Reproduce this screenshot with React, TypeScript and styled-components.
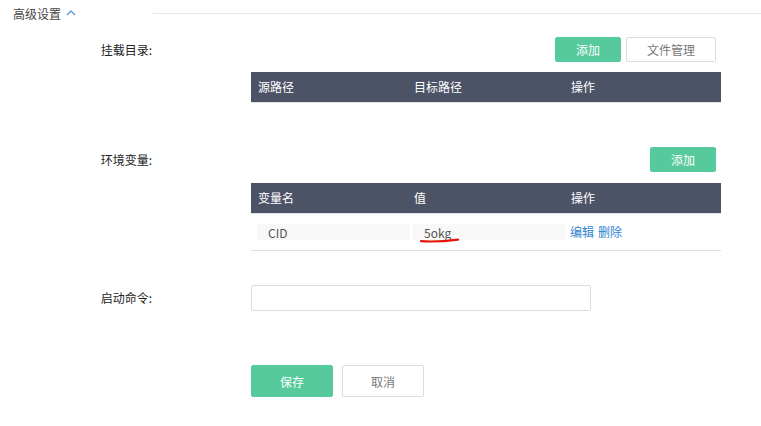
import styled, { createGlobalStyle } from "styled-components"

const GlobalStyle = createGlobalStyle`
  body{
    margin:0;
    background:#fff;
    font-family:"Noto Sans CJK SC","Noto Sans",sans-serif;
    font-size:12px;
    color:#333;
  }
`

const mountCols = ["源路径", "目标路径", "操作"]
const envCols = ["变量名", "值", "操作"]

const App = () => {
    return (
        <Page>
            <GlobalStyle />
            <SectionHeader>
                <Title>
                    高级设置
                    <svg width="10" height="6" viewBox="0 0 10 6">
                        <polyline points="1,5 5,1 9,5" fill="none" stroke="#5b9bd5" strokeWidth="1.3" />
                    </svg>
                </Title>
                <Rule />
            </SectionHeader>

            <FormRow $top={10}>
                <Label $lh={25}>挂载目录:</Label>
                <div>
                    <Toolbar $gap={10}>
                        <Button $primary>添加</Button>
                        <Button $w={90}>文件管理</Button>
                    </Toolbar>
                    <TableHead>
                        {mountCols.map(c => <HeadCell key={c}>{c}</HeadCell>)}
                    </TableHead>
                </div>
            </FormRow>

            <FormRow $top={44}>
                <Label $lh={25}>环境变量:</Label>
                <div>
                    <Toolbar $gap={11}>
                        <Button $primary>添加</Button>
                    </Toolbar>
                    <TableHead>
                        {envCols.map(c => <HeadCell key={c}>{c}</HeadCell>)}
                    </TableHead>
                    <TableRow>
                        <Cell><CellInput defaultValue="CID" readOnly /></Cell>
                        <Cell>
                            <Marked>
                                <CellInput defaultValue="5okg" readOnly />
                                <Squiggle width="39" height="5" viewBox="0 0 39 5">
                                    <path d="M1 3.2 Q18 4.2 38 1.6" fill="none" stroke="#e8140c" strokeWidth="2.2" strokeLinecap="round" />
                                </Squiggle>
                            </Marked>
                        </Cell>
                        <Cell>
                            <Link>编辑</Link>
                            <Link>删除</Link>
                        </Cell>
                    </TableRow>
                </div>
            </FormRow>

            <FormRow $top={34}>
                <Label $lh={26}>启动命令:</Label>
                <TextInput />
            </FormRow>

            <FormRow $top={54}>
                <span />
                <Actions>
                    <Button $primary $w={82} $h={32}>保存</Button>
                    <Button $w={82} $h={32}>取消</Button>
                </Actions>
            </FormRow>
        </Page>
    )
}

export default App

const Page = styled.div`
    width:761px;
    height:426px;
    overflow:hidden;
`

const SectionHeader = styled.div`
    display:flex;
    align-items:center;
    height:27px;
`

const Title = styled.div`
    width:153px;
    box-sizing:border-box;
    padding-left:13px;
    display:flex;
    align-items:center;
    gap:5px;
    color:#444;
    line-height:16px;
    svg{ margin-top:-2px; }
`

const Rule = styled.div`
    flex:1;
    height:1px;
    background:#e6e6e6;
`

const FormRow = styled.div<{ $top: number }>`
    display:grid;
    grid-template-columns:152px 470px;
    column-gap:99px;
    margin-top:${p => p.$top}px;
`

const Label = styled.div<{ $lh: number }>`
    text-align:right;
    line-height:${p => p.$lh}px;
    color:#222;
`

const Toolbar = styled.div<{ $gap: number }>`
    display:flex;
    justify-content:flex-end;
    gap:5px;
    padding-right:5px;
    margin-bottom:${p => p.$gap}px;
`

const Button = styled.button<{ $primary?: boolean; $w?: number; $h?: number }>`
    width:${p => p.$w || 66}px;
    height:${p => p.$h || 25}px;
    box-sizing:border-box;
    padding:0;
    border-radius:2px;
    font-family:inherit;
    font-size:12px;
    cursor:pointer;
    border:1px solid ${p => p.$primary ? "#56ca9c" : "#dcdcdc"};
    background:${p => p.$primary ? "#56ca9c" : "#fff"};
    color:${p => p.$primary ? "#fff" : "#777"};
`

const TableHead = styled.div`
    display:grid;
    grid-template-columns:156px 157px 1fr;
    height:30px;
    background:#4d5366;
    border-bottom:1px solid #e2e2e2;
`

const HeadCell = styled.div`
    color:#fff;
    line-height:30px;
    padding-left:7px;
`

const TableRow = styled.div`
    display:grid;
    grid-template-columns:156px 157px 1fr;
    height:36px;
    align-items:center;
    border-bottom:1px solid #dedede;
`

const Cell = styled.div`
    padding-left:6px;
    display:flex;
    align-items:center;
    gap:4px;
    min-width:0;
`

const CellInput = styled.input`
    flex-shrink:0;
    width:153px;
    height:16px;
    box-sizing:border-box;
    border:none;
    outline:none;
    background:#f8f8f8;
    padding:0 0 0 11px;
    font-family:inherit;
    font-size:12px;
    color:#555;
`

const Marked = styled.div`
    position:relative;
    flex-shrink:0;
`

const Squiggle = styled.svg`
    position:absolute;
    left:7px;
    top:14px;
`

const Link = styled.a`
    color:#2f84d1;
    cursor:pointer;
    line-height:16px;
`

const TextInput = styled.input`
    width:340px;
    height:26px;
    box-sizing:border-box;
    border:1px solid #dcdcdc;
    border-radius:2px;
    outline:none;
`

const Actions = styled.div`
    display:flex;
    gap:9px;
`
